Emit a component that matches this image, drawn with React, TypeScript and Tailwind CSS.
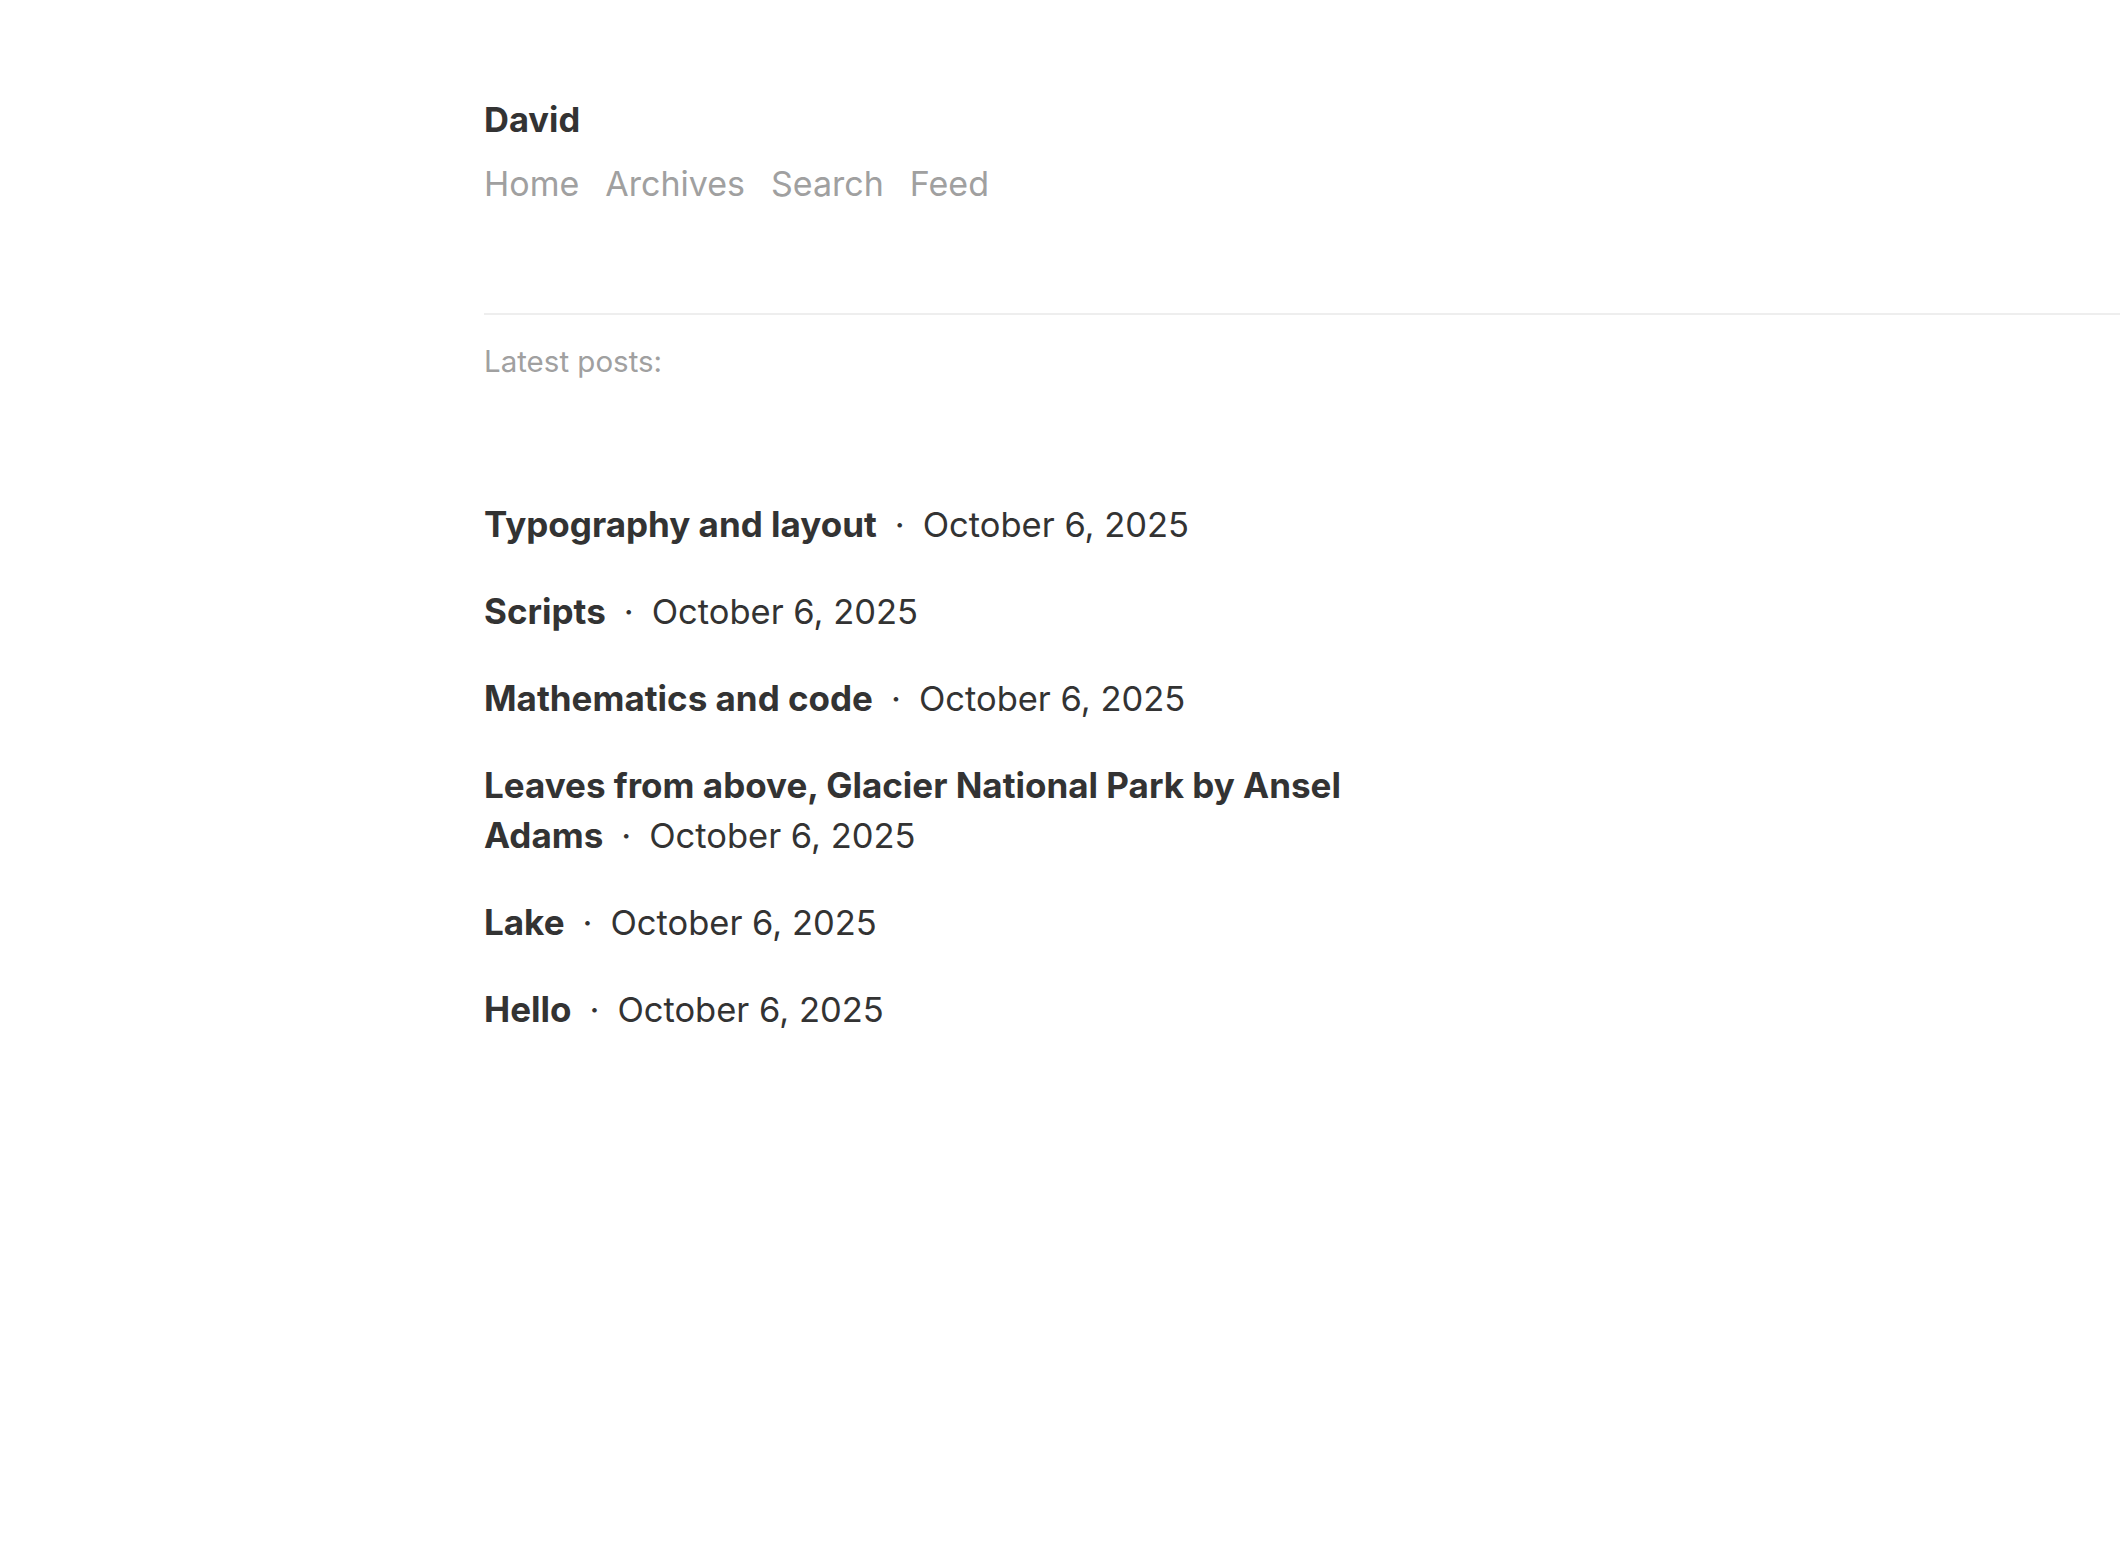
import React from 'react';

const posts = [
  { title: 'Typography and layout', date: 'October 6, 2025' },
  { title: 'Scripts', date: 'October 6, 2025' },
  { title: 'Mathematics and code', date: 'October 6, 2025' },
  { title: 'Leaves from above, Glacier National Park by Ansel Adams', date: 'October 6, 2025' },
  { title: 'Lake', date: 'October 6, 2025' },
  { title: 'Hello', date: 'October 6, 2025' },
];

const navItems = ['Home', 'Archives', 'Search', 'Feed'];

const App: React.FC = () => {
  return (
    <div
      className="min-h-screen w-full bg-white pl-[484px] pt-[95px] text-[#333333]"
      style={{ fontFamily: 'Inter, "Noto Sans", sans-serif' }}
    >
      <header>
        <div className="text-[34.5px] font-bold leading-[50px]">David</div>
        <nav className="mt-[14px] flex gap-[26px] text-[34px] leading-[50px] text-[#a0a0a0]">
          {navItems.map((item) => (
            <a key={item} href="#" className="hover:text-[#333333]">
              {item}
            </a>
          ))}
        </nav>
      </header>

      <hr className="mt-[104px] border-0 border-t-2 border-[#eeeeee]" />

      <main>
        <p className="mt-[26px] text-[29.5px] leading-[40px] text-[#a0a0a0]">Latest posts:</p>

        <ul className="mt-[119px] flex max-w-[900px] flex-col gap-[37px]">
          {posts.map((post) => (
            <li key={post.title} className="text-[34.5px] leading-[50px]">
              <a href="#" className="text-[35px] font-bold leading-none">
                {post.title}
              </a>
              <span className="px-[18px] leading-none">·</span>
              <span className="leading-none">{post.date}</span>
            </li>
          ))}
        </ul>
      </main>
    </div>
  );
};

export default App;
